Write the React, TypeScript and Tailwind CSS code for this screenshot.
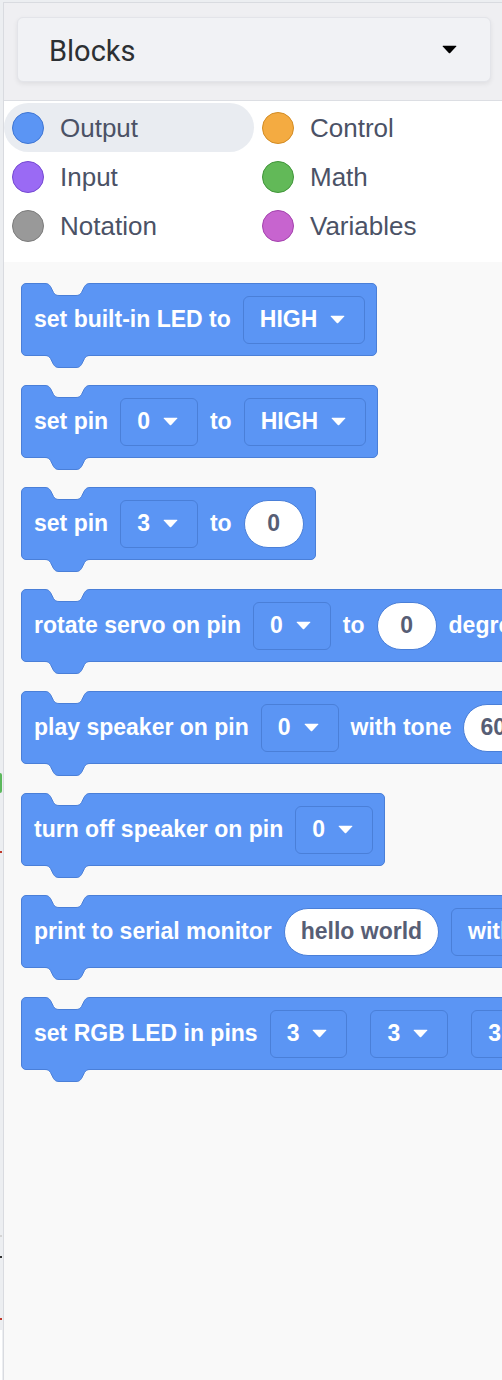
import React from 'react';

// one notch / tab outline, 47px wide, starting at height y0
const notch = (y0: number) =>
  `M0 ${y0} H1 C4 ${y0} 5 ${y0 + 1} 6.5 ${y0 + 3} L9.5 ${y0 + 9} C11 ${y0 + 11} 12 ${y0 + 12} 15 ${y0 + 12} H32 C35 ${y0 + 12} 36 ${y0 + 11} 37.5 ${y0 + 9} L40.5 ${y0 + 3} C42 ${y0 + 1} 43 ${y0} 46 ${y0} H47`;

const Caret = ({ color = '#ffffff' }: { color?: string }) => (
  <svg width="15" height="9" viewBox="0 0 15 9" className="shrink-0">
    <path d="M1 0.8 H14 Q14.6 0.8 14.2 1.4 L8.2 7.9 Q7.5 8.6 6.8 7.9 L0.8 1.4 Q0.4 0.8 1 0.8 Z" fill={color} />
  </svg>
);

const Label = ({ children }: { children: React.ReactNode }) => (
  <span className="whitespace-nowrap text-[23px] font-bold leading-none text-white">{children}</span>
);

const Dropdown = ({ value, spaced }: { value: string; spaced?: boolean }) => (
  <div
    className={`flex h-[48px] shrink-0 items-center gap-[13px] rounded-[6px] border border-[#4a7fd8] bg-[#5b95f4] pl-[16px] pr-[19px] ${spaced ? 'ml-[11px]' : ''}`}
  >
    <span className="whitespace-nowrap text-[23px] font-bold leading-none text-white">{value}</span>
    <Caret />
  </div>
);

const Oval = ({ value }: { value: string }) => (
  <div className="flex h-[48px] min-w-[60px] shrink-0 items-center justify-center rounded-full border border-[#4a7fd8] bg-white px-[16px]">
    <span className="whitespace-nowrap text-[23px] font-bold leading-none text-[#575e75]">{value}</span>
  </div>
);

const Block = ({ children }: { children: React.ReactNode }) => (
  <div className="relative flex h-[73px] w-max shrink-0 items-center gap-[12px] rounded-[5px] border border-[#4a7fd8] bg-[#5b95f4] pl-[12px] pr-[11px]">
    <svg className="absolute left-[22px] top-[-1px]" width="47" height="14" viewBox="0 0 47 14">
      <path d={notch(0.5) + ' L47 0 L0 0 Z'} fill="#f9f9f9" />
      <path d={notch(0.5)} fill="none" stroke="#4a7fd8" strokeWidth="1" />
    </svg>
    {children}
    <svg className="absolute left-[22px] top-[71px]" width="47" height="14" viewBox="0 0 47 14">
      <path d={notch(0.5) + ' L47 0 L0 0 Z'} fill="#5b95f4" />
      <path d={notch(0.5)} fill="none" stroke="#4a7fd8" strokeWidth="1" />
    </svg>
  </div>
);

const categories = [
  { name: 'Output', fill: 'bg-[#5b95f4]', ring: 'border-[#3f76d4]', active: true },
  { name: 'Control', fill: 'bg-[#f4ab41]', ring: 'border-[#d38c24]' },
  { name: 'Input', fill: 'bg-[#9a6af4]', ring: 'border-[#7549d2]' },
  { name: 'Math', fill: 'bg-[#62b958]', ring: 'border-[#41963a]' },
  { name: 'Notation', fill: 'bg-[#999999]', ring: 'border-[#7c7c7c]' },
  { name: 'Variables', fill: 'bg-[#c764cf]', ring: 'border-[#a443ae]' },
];

export default function App() {
  return (
    <div className="flex h-[1380px] w-[502px] overflow-hidden bg-[#eceef1] pt-[2px] font-['Liberation_Sans',Arial,sans-serif]">
      {/* cut-off editor strip on the left */}
      <div className="relative mt-[-2px] w-[3px] shrink-0">
        <div className="absolute left-0 top-[773px] h-[20px] w-[2px] rounded-r bg-[#5cb85c]" />
        <div className="absolute left-0 top-[851px] h-[2px] w-[2px] bg-[#c0392b]" />
        <div className="absolute left-0 top-[1235px] h-[2px] w-[2px] bg-[#d4d4d4]" />
        <div className="absolute left-0 top-[1256px] h-[2px] w-[2px] bg-[#333333]" />
        <div className="absolute left-0 top-[1318px] h-[2px] w-[2px] bg-[#c0392b]" />
        <div className="absolute bottom-0 left-0 top-[1330px] w-[2px] bg-white" />
      </div>

      <div className="flex min-w-0 flex-1 flex-col border-l border-t border-[#d9dbe0]">
        {/* header */}
        <div className="shrink-0 border-b border-[#dcdee3] bg-[#efeff2] pb-[18px] pl-[13px] pt-[14px]">
          <div className="flex h-[65px] w-[474px] items-center justify-between rounded-[6px] border border-[#e3e4e9] bg-[#f1f2f5] pl-[31px] pr-[33px] shadow-[0_2px_5px_rgba(0,0,0,0.07)]">
            <span className="mt-[3px] font-['Roboto',sans-serif] text-[29px] leading-none text-[#2c3033]">Blocks</span>
            <Caret color="#000000" />
          </div>
        </div>

        {/* categories */}
        <div className="grid shrink-0 grid-cols-[250px_250px] bg-white pb-[12px] pt-[2px]">
          {categories.map((c) => (
            <div
              key={c.name}
              className={`flex h-[49px] items-center rounded-full ${c.active ? 'bg-[#e9ecf1]' : ''}`}
            >
              <span className={`ml-[8px] h-[32px] w-[32px] shrink-0 rounded-full border-[1.5px] ${c.fill} ${c.ring}`} />
              <span className="ml-[16px] whitespace-nowrap text-[26px] leading-none text-[#4b5266]">{c.name}</span>
            </div>
          ))}
        </div>

        {/* flyout */}
        <div className="flex flex-1 flex-col gap-[29px] bg-[#f9f9f9] pl-[17px] pt-[21px]">
          <Block>
            <Label>set built-in LED to</Label>
            <Dropdown value="HIGH" />
          </Block>
          <Block>
            <Label>set pin</Label>
            <Dropdown value="0" />
            <Label>to</Label>
            <Dropdown value="HIGH" />
          </Block>
          <Block>
            <Label>set pin</Label>
            <Dropdown value="3" />
            <Label>to</Label>
            <Oval value="0" />
          </Block>
          <Block>
            <Label>rotate servo on pin</Label>
            <Dropdown value="0" />
            <Label>to</Label>
            <Oval value="0" />
            <Label>degrees</Label>
          </Block>
          <Block>
            <Label>play speaker on pin</Label>
            <Dropdown value="0" />
            <Label>with tone</Label>
            <Oval value="600" />
          </Block>
          <Block>
            <Label>turn off speaker on pin</Label>
            <Dropdown value="0" />
          </Block>
          <Block>
            <Label>print to serial monitor</Label>
            <Oval value="hello world" />
            <Dropdown value="with newline" />
          </Block>
          <Block>
            <Label>set RGB LED in pins</Label>
            <Dropdown value="3" />
            <Dropdown value="3" spaced />
            <Dropdown value="3" spaced />
          </Block>
        </div>
      </div>
    </div>
  );
}
